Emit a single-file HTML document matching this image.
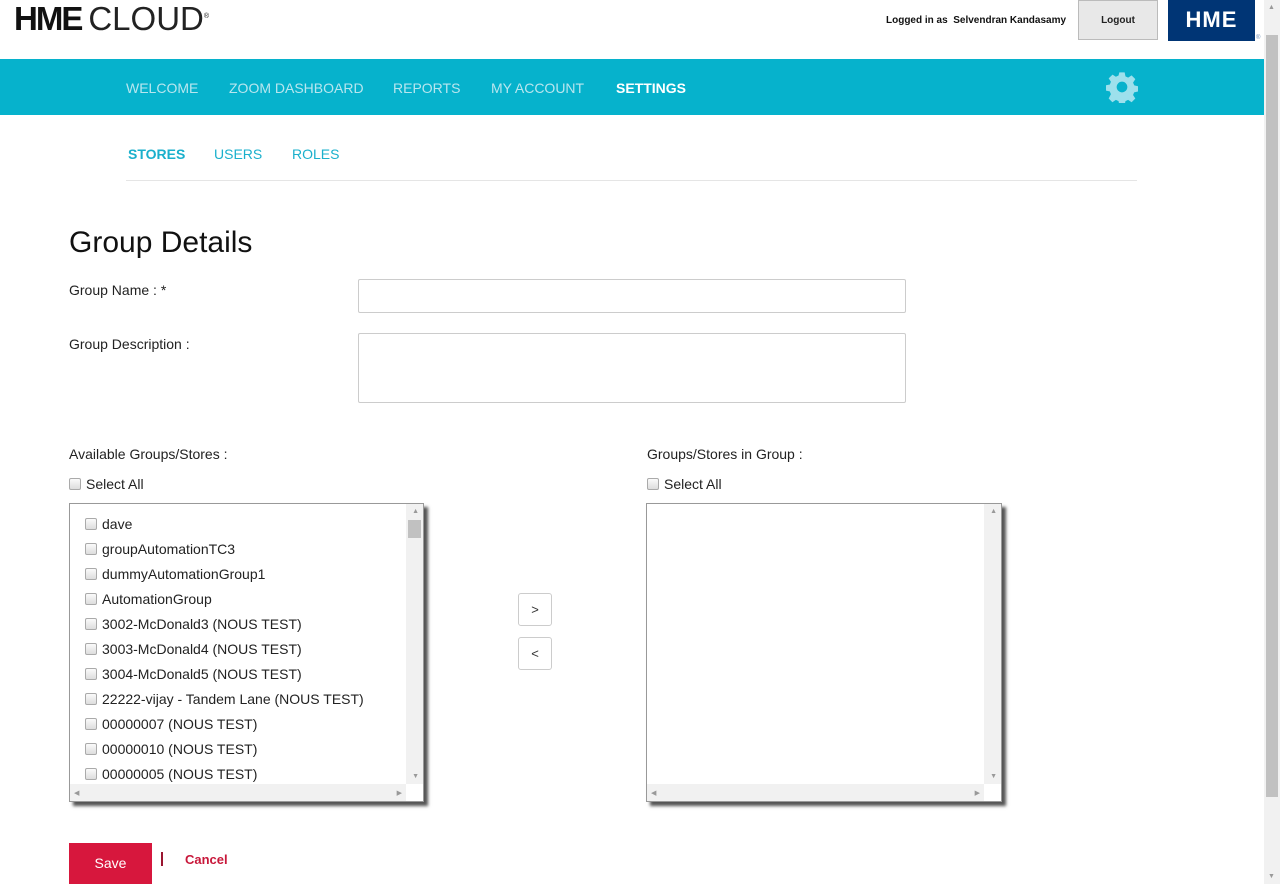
<!DOCTYPE html>
<html><head><style>
*{box-sizing:border-box}
body{margin:0;width:1280px;height:884px;overflow:hidden;font-family:"Liberation Sans",Arial,sans-serif;background:#fff;position:relative;color:#222}
.abs{position:absolute}
.nav a{position:absolute;top:80px;font-size:14px;color:#b8e6ef;text-decoration:none}
.sub{position:absolute;top:146px;font-size:14px;color:#1ab0cc}
.lbl{position:absolute;font-size:14px;color:#222}
.inp{position:absolute;border:1px solid #ccc;border-radius:2px;background:#fff}
.cb{display:inline-block;width:12px;height:12px;border:1px solid #aaa;border-radius:2px;background:linear-gradient(#fafafa,#ddd);vertical-align:-1px;margin-right:5px}
.box{position:absolute;border:1px solid #999;background:#fff;box-shadow:4px 4px 3px #555}
.item{position:absolute;left:15px;font-size:14px;color:#222}
.vs{position:absolute;right:0;top:0;width:17px;bottom:17px;background:#f1f1f1}
.hs{position:absolute;left:0;bottom:0;right:17px;height:17px;background:#f1f1f1}
.btn{position:absolute;width:34px;height:33px;border:1px solid #ccc;border-radius:3px;background:#fff;font-size:13px;text-align:center;line-height:31px;color:#333}
.ar{position:absolute;font-size:7px;color:#999}
</style></head><body>
<div class="abs" style="left:14px;top:0px;font-size:33px;color:#111;white-space:nowrap"><b style="font-weight:900;letter-spacing:-2px">HME</b><span style="font-weight:300;color:#222;margin-left:7px">CLOUD</span><sup style="font-size:7px">®</sup></div>
<div class="abs" style="left:886px;top:15px;font-size:10px;font-weight:bold;color:#111">Logged in as&nbsp; Selvendran Kandasamy</div>
<div class="abs" style="left:1078px;top:0;width:80px;height:40px;border:1px solid #bbb;background:#e8e8e8;font-size:10px;font-weight:bold;text-align:center;line-height:40px">Logout</div>
<div class="abs" style="left:1168px;top:0;width:87px;height:41px;background:#003575;color:#fff;font-weight:900;font-size:22px;text-align:center;line-height:40px;letter-spacing:1px">HME</div>
<div class="abs" style="left:1256px;top:35px;font-size:6px;color:#6b8db8">®</div>
<div class="abs" style="left:0;top:59px;width:1264px;height:56px;background:#06b2cc"></div>
<div class="nav"><a style="left:126px">WELCOME</a><a style="left:229px">ZOOM DASHBOARD</a><a style="left:393px">REPORTS</a><a style="left:491px">MY ACCOUNT</a><a style="left:616px;color:#fff;font-weight:bold">SETTINGS</a></div>
<svg class="abs" style="left:1106px;top:71px" width="32" height="32" viewBox="0 0 24 24"><path fill="#9de0ec" fill-rule="evenodd" d="M10 1h4l.6 3 2 1 2.6-1.7 2.8 2.8L20.3 8.7l.9 2.1 2.8.6v4l-2.9.6-.8 2 1.7 2.6-2.8 2.8-2.6-1.7-2 .9-.6 2.9h-4l-.6-2.9-2-.9-2.6 1.7-2.8-2.8L3.7 17.3l-.9-2-2.8-.6v-4l2.9-.6.8-2L2 5.5 4.9 2.7 7.4 4.3l2-.9zM12 8a4 4 0 1 0 0 8 4 4 0 0 0 0-8z"/></svg>
<div class="sub" style="left:128px;font-weight:bold">STORES</div><div class="sub" style="left:214px">USERS</div><div class="sub" style="left:292px">ROLES</div>
<div class="abs" style="left:126px;top:180px;width:1011px;height:1px;background:#e5e5e5"></div>
<div class="abs" style="left:69px;top:226px;font-size:30px;color:#111">Group Details</div>
<div class="lbl" style="left:69px;top:282px">Group Name : *</div>
<div class="inp" style="left:358px;top:279px;width:548px;height:34px"></div>
<div class="lbl" style="left:69px;top:336px">Group Description :</div>
<div class="inp" style="left:358px;top:333px;width:548px;height:70px"></div>
<div class="lbl" style="left:69px;top:446px">Available Groups/Stores :</div>
<div class="lbl" style="left:69px;top:476px"><span class="cb"></span>Select All</div>
<div class="lbl" style="left:647px;top:446px">Groups/Stores in Group :</div>
<div class="lbl" style="left:647px;top:476px"><span class="cb"></span>Select All</div>
<div class="box" style="left:69px;top:503px;width:355px;height:299px">
<div class="vs"><div style="position:absolute;left:2px;top:16px;width:13px;height:18px;background:#c1c1c1"></div></div><div class="hs"></div>
<div class="ar" style="right:4px;top:4px">▲</div><div class="ar" style="right:4px;bottom:21px">▼</div><div class="ar" style="left:4px;bottom:4px">◀</div><div class="ar" style="right:21px;bottom:4px">▶</div>
<div class="item" style="top:12px"><span class="cb"></span>dave</div>
<div class="item" style="top:37px"><span class="cb"></span>groupAutomationTC3</div>
<div class="item" style="top:62px"><span class="cb"></span>dummyAutomationGroup1</div>
<div class="item" style="top:87px"><span class="cb"></span>AutomationGroup</div>
<div class="item" style="top:112px"><span class="cb"></span>3002-McDonald3 (NOUS TEST)</div>
<div class="item" style="top:137px"><span class="cb"></span>3003-McDonald4 (NOUS TEST)</div>
<div class="item" style="top:162px"><span class="cb"></span>3004-McDonald5 (NOUS TEST)</div>
<div class="item" style="top:187px"><span class="cb"></span>22222-vijay - Tandem Lane (NOUS TEST)</div>
<div class="item" style="top:212px"><span class="cb"></span>00000007 (NOUS TEST)</div>
<div class="item" style="top:237px"><span class="cb"></span>00000010 (NOUS TEST)</div>
<div class="item" style="top:262px"><span class="cb"></span>00000005 (NOUS TEST)</div>
</div>
<div class="btn" style="left:518px;top:593px">&gt;</div>
<div class="btn" style="left:518px;top:637px">&lt;</div>
<div class="box" style="left:646px;top:503px;width:356px;height:299px">
<div class="vs"></div><div class="hs"></div>
<div class="ar" style="right:4px;top:4px">▲</div><div class="ar" style="right:4px;bottom:21px">▼</div><div class="ar" style="left:4px;bottom:4px">◀</div><div class="ar" style="right:21px;bottom:4px">▶</div>
</div>
<div class="abs" style="left:69px;top:843px;width:83px;height:41px;background:#d7173d;color:#fff;font-size:14px;text-align:center;line-height:41px">Save</div>
<div class="abs" style="left:161px;top:852px;width:2px;height:14px;background:#9a1530"></div>
<div class="abs" style="left:185px;top:852px;font-size:13px;font-weight:bold;color:#c8173a">Cancel</div>
<div class="abs" style="left:1264px;top:0;width:16px;height:884px;background:#f1f1f1"><div style="position:absolute;left:2px;top:35px;width:12px;height:762px;background:#c1c1c1"></div><div class="ar" style="left:4px;top:4px">▲</div><div class="ar" style="left:4px;bottom:4px">▼</div></div>
</body></html>
